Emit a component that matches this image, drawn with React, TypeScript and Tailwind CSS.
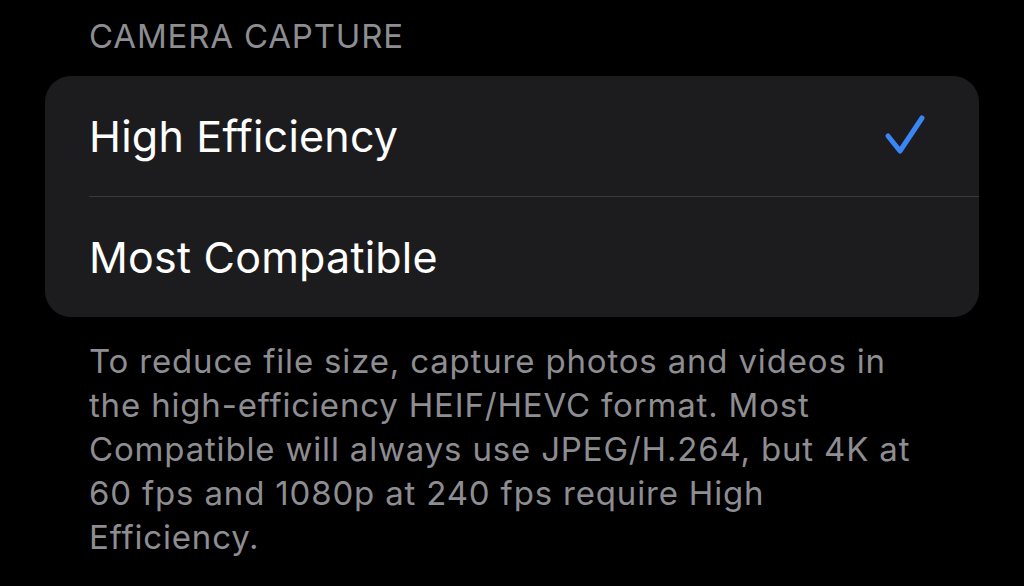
export default function App() {
  return (
    <div className="min-h-[586px] w-[1024px] bg-black px-[45px] pt-[14px] font-['Inter',sans-serif] antialiased">
      <h2 className="px-[44px] text-[33px] leading-[44px] tracking-[0.025em] text-[#8d8d92]">CAMERA CAPTURE</h2>
      <div className="mt-[18px] overflow-hidden rounded-[26px] bg-[#1c1c1e]">
        <div className="flex h-[120px] items-center justify-between pl-[44px] pr-[52px]">
          <span className="text-[43px] leading-none tracking-[0.005em] text-white">High Efficiency</span>
          <svg width="44" height="44" viewBox="0 0 44 44" fill="none">
            <path d="M5 22 L17 37 L39 4" stroke="#3a86f6" strokeWidth="5" strokeLinecap="round" strokeLinejoin="round" />
          </svg>
        </div>
        <div className="ml-[44px] h-px bg-[#3a3a3c]" />
        <div className="flex h-[120px] items-center pl-[44px]">
          <span className="text-[43px] leading-none tracking-[0.005em] text-white">Most Compatible</span>
        </div>
      </div>
      <p className="mt-[22px] px-[44px] text-[33px] leading-[44px] tracking-[0.025em] text-[#8d8d92]">
        To reduce file size, capture photos and videos in the high-efficiency HEIF/HEVC format. Most Compatible will always use JPEG/H.264, but 4K at 60 fps and 1080p at 240 fps require High Efficiency.
      </p>
    </div>
  );
}
